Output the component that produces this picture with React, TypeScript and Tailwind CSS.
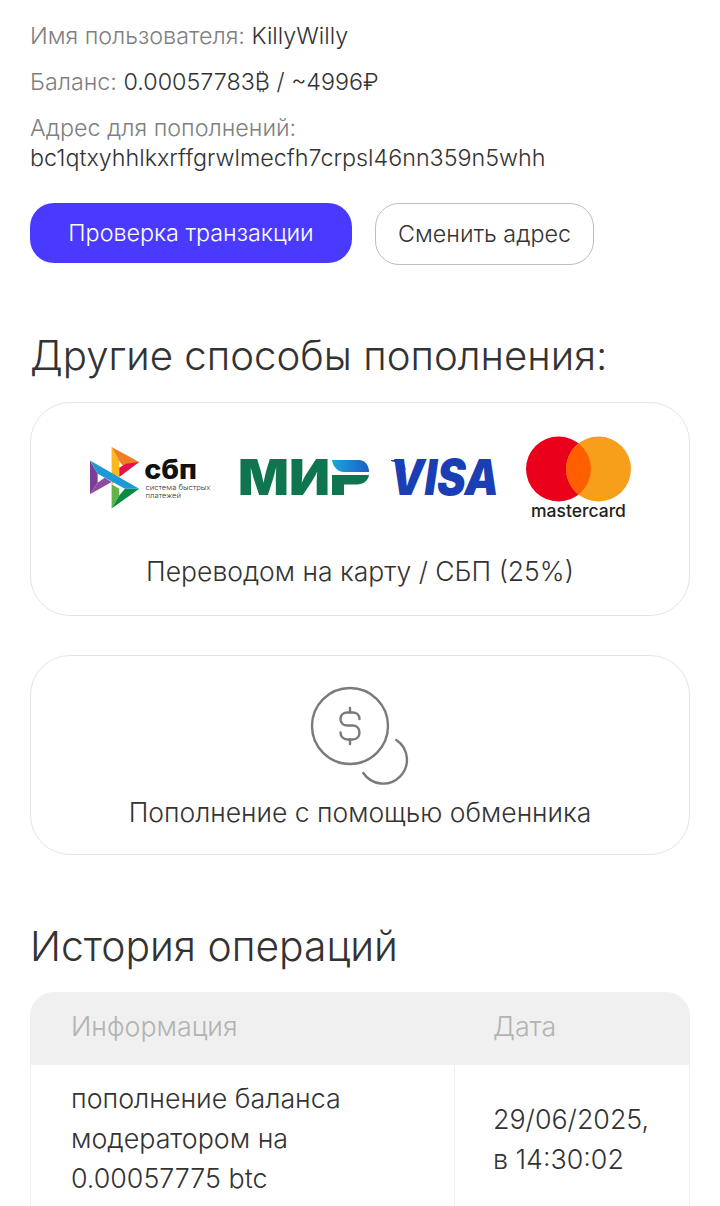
function SbpLogo() {
  return (
    <svg width="123" height="62" viewBox="60 80 370 186" className="shrink-0">
      <polygon points="125,80 148,122 148,165 125,195" fill="#fbb91f" />
      <polygon points="125,80 208,125 168,148 148,122" fill="#f07f23" />
      <polygon points="208,125 148,170 148,142 168,130" fill="#e5114e" />
      <polygon points="60,120 83,160 83,187 60,222" fill="#7b3f98" />
      <polygon points="60,222 125,185 104,172 83,187" fill="#8f4aa0" />
      <polygon points="125,192 148,205 148,226 125,265" fill="#63b346" />
      <polygon points="125,265 208,205 165,205 148,226" fill="#0a8b43" />
      <polygon points="60,120 208,205 165,205 83,160" fill="#1b9ad6" />
      <text x="223" y="175" fontSize="82" fontWeight="800" fill="#111" fontFamily="Inter, sans-serif" textLength="159" lengthAdjust="spacingAndGlyphs">сбп</text>
      <text x="227" y="210" fontSize="21" fill="#333" fontFamily="Inter, sans-serif" textLength="195" lengthAdjust="spacingAndGlyphs">система быстрых</text>
      <text x="227" y="234" fontSize="21" fill="#333" fontFamily="Inter, sans-serif" textLength="107" lengthAdjust="spacingAndGlyphs">платежей</text>
    </svg>
  );
}

function MirLogo() {
  return (
    <svg width="128" height="50" viewBox="0 -7 128 50" className="shrink-0 overflow-visible">
      <defs>
        <linearGradient id="mirp" x1="0" y1="0" x2="1" y2="0">
          <stop offset="0" stopColor="#1aa6d8" />
          <stop offset="1" stopColor="#1a5fc8" />
        </linearGradient>
      </defs>
      <text x="-3" y="35" fontSize="49" fontWeight="900" fill="#0f754e" fontFamily="Inter, sans-serif" textLength="92" lengthAdjust="spacingAndGlyphs">МИ</text>
      <path d="M91 0H118C124 0 128 5 128 12H103C96 12 92 6 91 0Z" fill="url(#mirp)" />
      <path d="M91 15H128C127 21 122 24.500 116 24.500H103V35H91Z" fill="#0f754e" />
    </svg>
  );
}

function VisaLogo() {
  return (
    <svg width="106" height="50" viewBox="0 -7 106 50" className="shrink-0 overflow-visible">
      <text x="-1" y="35" fontSize="49" fontWeight="900" fontStyle="italic" fill="#1a3fb5" fontFamily="Inter, sans-serif" textLength="109" lengthAdjust="spacingAndGlyphs">VISA</text>
      <path d="M0 0h12l3 10C11 5 6 2 0 1Z" fill="#1a3fb5" />
    </svg>
  );
}

function MastercardLogo() {
  return (
    <svg width="105" height="84" viewBox="0 0 105 84" className="shrink-0">
      <circle cx="32.5" cy="33" r="32.5" fill="#eb001b" />
      <circle cx="72.5" cy="33" r="32.5" fill="#f79e1b" />
      <path d="M52.5 7.4a32.5 32.5 0 0 1 0 51.2a32.5 32.5 0 0 1 0-51.2Z" fill="#ff5f00" />
      <text x="52.5" y="81" textAnchor="middle" fontSize="17.5" fontWeight="500" fill="#231f20" fontFamily="Inter, sans-serif">mastercard</text>
    </svg>
  );
}

function CoinIcon() {
  return (
    <svg width="104" height="104" viewBox="0 0 104 104" fill="none" stroke="#7a7a7a" strokeWidth="2.4" strokeLinecap="round">
      <circle cx="40" cy="40" r="38" />
      <path d="M49.5 33c0-4-3-6.5-7-6.5h-5c-4 0-7 2.5-7 6.5s3 6.5 7 6.5h5c4 0 7 2.5 7 7s-3 7-7 7h-5c-4 0-7-3-7-7" />
      <path d="M40 22v4.500M40 53.500v4.500" />
      <path d="M86.300 54A23.800 23.800 0 1 1 53.300 87" />
    </svg>
  );
}

function PayCard({ icon, label, className }: { icon: React.ReactNode; label: string; className: string }) {
  return (
    <div className={`flex flex-col items-center rounded-[40px] border border-[#e4e4e4] bg-white ${className}`}>
      {icon}
      <div className="text-[26.500px] leading-[32px] text-[#333]">{label}</div>
    </div>
  );
}

export default function App() {
  return (
    <div className="h-[1206px] overflow-hidden bg-white px-[30px] pt-[20px] font-['Inter',sans-serif] text-[23.300px] font-light text-[#333]">
      <p className="leading-[32px] text-[#808080]">
        Имя пользователя: <span className="text-[#333]">KillyWilly</span>
      </p>
      <p className="mt-[14px] leading-[32px] text-[#808080]">
        Баланс: <span className="text-[#333]">0.00057783₿ / ~4996₽</span>
      </p>
      <p className="mt-[14px] leading-[31px] text-[#808080]">Адрес для пополнений:</p>
      <p className="leading-[30px]">bc1qtxyhhlkxrffgrwlmecfh7crpsl46nn359n5whh</p>

      <div className="mt-[30px] flex items-start gap-[23px]">
        <button className="h-[60px] w-[322px] rounded-[24px] bg-[#4a3aff] text-white">Проверка транзакции</button>
        <button className="h-[62px] w-[219px] rounded-[24px] border border-[#bdbdbd] bg-white text-[#333]">Сменить адрес</button>
      </div>

      <h2 className="mt-[68px] text-[40.200px] leading-[46px] font-light">Другие способы пополнения:</h2>

      <PayCard
        className="mt-[23px] h-[214px] gap-[35px] pt-[33px]"
        label="Переводом на карту / СБП (25%)"
        icon={
          <div className="flex h-[84px] items-center self-stretch pl-[59px]">
            <SbpLogo />
            <div className="ml-[28px]"><MirLogo /></div>
            <div className="ml-[22px]"><VisaLogo /></div>
            <div className="ml-[29px]"><MastercardLogo /></div>
          </div>
        }
      />

      <div className="mt-[39px]">
        <PayCard
          className="h-[200px] pt-[30px]"
          label="Пополнение с помощью обменника"
          icon={<div className="ml-[4px] h-[110px]"><CoinIcon /></div>}
        />
      </div>

      <h2 className="mt-[68px] text-[40.800px] leading-[46px] font-light">История операций</h2>

      <div className="mt-[23px] overflow-hidden rounded-t-[24px] border-x border-[#eeeeee] text-[26.800px]">
        <div className="flex h-[73px] items-center bg-[#f0f0f0] pb-[4px] text-[#b3b3b3]">
          <div className="w-[424px] pl-[40px]">Информация</div>
          <div className="pl-[38px]">Дата</div>
        </div>
        <div className="flex">
          <div className="w-[424px] border-r border-[#eeeeee] pt-[13px] pb-[14px] pl-[40px] leading-[40px]">
            пополнение баланса<br />модератором на<br />0.00057775 btc
          </div>
          <div className="flex items-center pl-[38px] leading-[40px]">
            <div>29/06/2025,<br />в 14:30:02</div>
          </div>
        </div>
      </div>
    </div>
  );
}
